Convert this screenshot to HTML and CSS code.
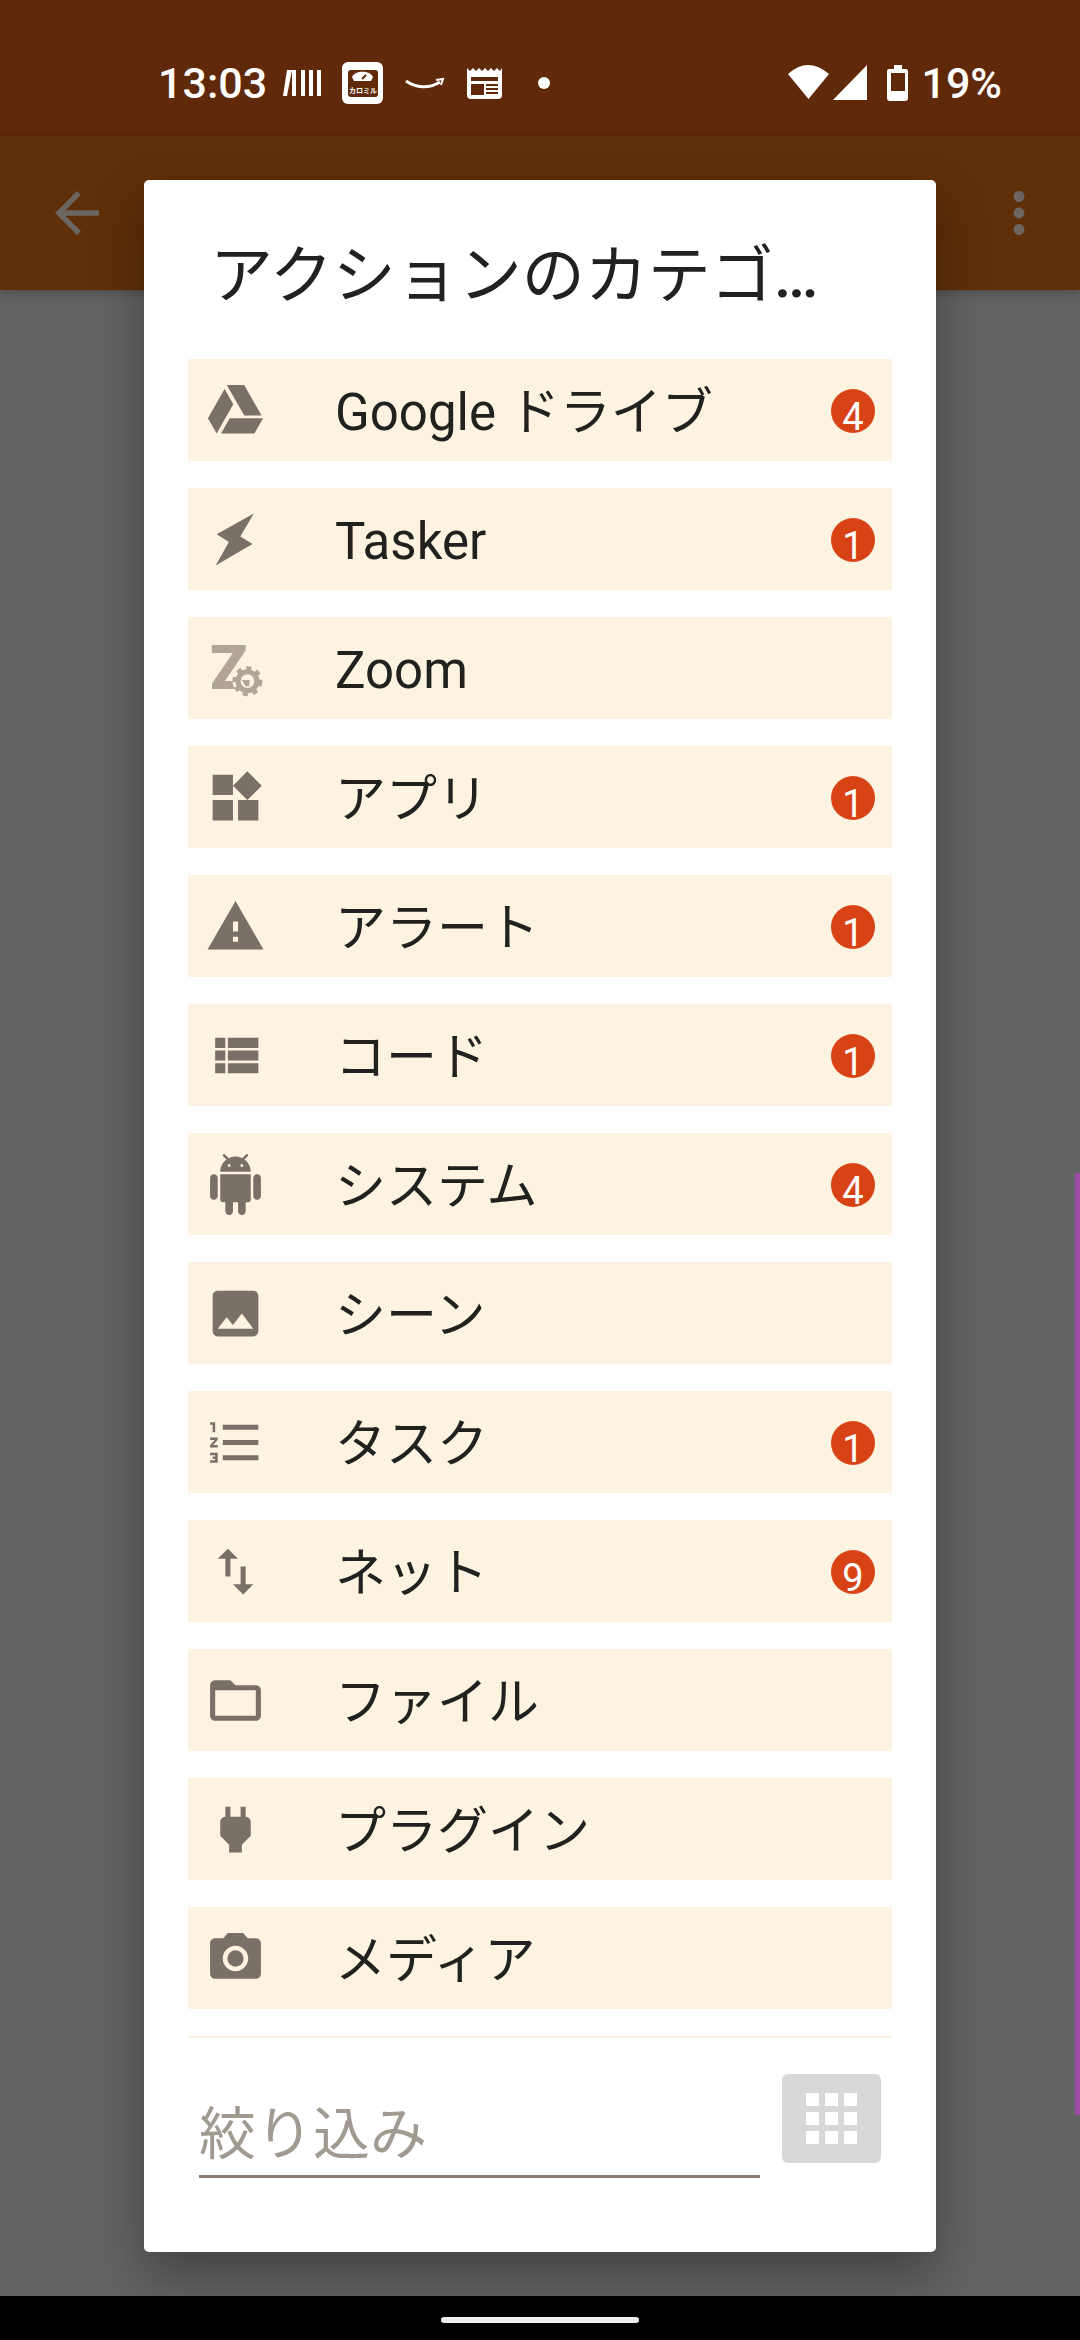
FILE: index.html
```html
<!DOCTYPE html>
<html lang="ja">
<head>
<meta charset="utf-8">
<meta name="viewport" content="width=device-width, initial-scale=1">
<title>アクションのカテゴリ</title>
<link rel="stylesheet" href="styles.css">
</head>
<body>
<div class="screen">
  <div class="status">
    <div class="status-left">
      <span class="clock">13:03</span>
      <div class="notices">
        <svg width="40" height="42" viewBox="0 0 40 42" fill="#fff"><path d="M5 8h5L5 34H1zM10 8h4v26h-4zM19 8h4v26h-4zM27 8h4v26h-4zM35 8h4v26h-4z"/></svg>
        <svg width="42" height="42" viewBox="0 0 42 42"><rect width="41" height="42" rx="6" fill="#fff"/><rect x="6" y="8" width="30" height="27" rx="3" fill="#5f290a"/><path d="M10 15c3-7 18-7 21 0l-2 4H12z" fill="#fff"/><path d="M20 17l4-4" stroke="#5f290a" stroke-width="2"/><text x="7" y="31" class="mini">カロミル</text></svg>
        <svg width="42" height="42" viewBox="0 0 42 42" fill="none" stroke="#fff"><path d="M2 19c10 7 23 8 34 1" stroke-width="3"/><path d="M32 18l7-1-2 6" stroke-width="2"/></svg>
        <svg width="36" height="42" viewBox="0 0 36 42"><path d="M1 6l3 3 3-3 3 3 3-3 3 3 3-3 3 3 3-3 3 3 3-3 3 3 2-3v27q0 4-4 4H5q-4 0-4-4z" fill="#fff"/><path d="M5 15h27v4H5zM5 22h13v11H5zM20 22h12v2H20zM20 26h12v2H20zM20 30h12v2H20z" fill="#5f290a"/></svg>
        <span class="more-dot"></span>
      </div>
    </div>
    <div class="status-right">
      <svg width="79" height="36" viewBox="0 0 79 36" fill="#fff"><path d="M0 9Q20-9 41 9L20.500 34zM79 0v35H45z"/></svg>
      <svg class="battery" width="22" height="36" viewBox="0 0 22 36"><path d="M7 0h8v4h4q2 0 2 2v27q0 3-3 3H3q-3 0-3-3V6q0-2 2-2h5zM4 8v18h14V8z" fill="#fff" fill-rule="evenodd"/></svg>
      <span class="percent">19%</span>
    </div>
  </div>
  <header class="appbar">
    <button class="bar-button" aria-label="戻る"><svg viewBox="0 0 24 24"><path d="M20 11H7.830l5.590-5.590L12 4l-8 8 8 8 1.410-1.410L7.830 13H20v-2z"/></svg></button>
    <button class="bar-button" aria-label="メニュー"><svg viewBox="0 0 24 24"><path d="M12 8c1.100 0 2-.9 2-2s-.9-2-2-2-2 .9-2 2 .9 2 2 2zm0 2c-1.100 0-2 .9-2 2s.9 2 2 2 2-.9 2-2-.9-2-2-2zm0 6c-1.100 0-2 .9-2 2s.9 2 2 2 2-.9 2-2-.9-2-2-2z"/></svg></button>
  </header>
  <main class="content">
    <section class="dialog" role="dialog" aria-labelledby="dialog-title">
      <h1 class="title" id="dialog-title">アクションのカテゴ<span class="ellipsis">…</span></h1>
      <ul class="list">
        <li><button class="row"><svg class="icon" viewBox="0 0 24 24"><path d="M7.710 3.500L1.150 15l3.430 6L11.130 9.500zM9.730 15L6.300 21h13.120l3.430-6zM22.280 14L15.420 2H8.580l6.860 12z"/></svg><span class="label">Google ドライブ</span><span class="badge">4</span></button></li>
        <li><button class="row"><svg class="icon" viewBox="0 0 24 24"><path d="M19.200 1.800L13.900 10.800l4.800 3L4.200 22.200 9.400 13 4.600 9.900z"/></svg><span class="label">Tasker</span><span class="badge">1</span></button></li>
        <li><button class="row"><svg class="icon icon-zoom" viewBox="0 0 24 24"><text x="2" y="20" class="zoom-letter">Z</text><circle cx="16.700" cy="17" r="5.800" class="gear-gap"/><circle cx="16.700" cy="17" r="3.700" class="gear-ring"/><circle cx="16.700" cy="17" r="4.900" class="gear-teeth" pathLength="16"/><path d="M14.500 16.500h3v2.500h-1.500z"/></svg><span class="label">Zoom</span></button></li>
        <li><button class="row"><svg class="icon" viewBox="0 0 24 24"><path d="M13 13v8h8v-8h-8zM3 21h8v-8H3v8zM3 3v8h8V3H3zm13.660-1.310L11 7.340 16.660 13l5.660-5.660-5.660-5.650z"/></svg><span class="label">アプリ</span><span class="badge">1</span></button></li>
        <li><button class="row"><svg class="icon" viewBox="0 0 24 24"><path d="M1 21h22L12 2 1 21zm12-3h-2v-2h2v2zm0-4h-2v-4h2v4z"/></svg><span class="label">アラート</span><span class="badge">1</span></button></li>
        <li><button class="row"><svg class="icon" viewBox="0 0 24 24"><path d="M4 14h4v-4H4v4zm0 5h4v-4H4v4zM4 9h4V5H4v4zm5 5h12v-4H9v4zm0 5h12v-4H9v4zM9 5v4h12V5H9z"/></svg><span class="label">コード</span><span class="badge">1</span></button></li>
        <li><button class="row"><svg class="icon" viewBox="0 0 24 24"><path d="M6 18c0 .55.45 1 1 1h1v3.500c0 .83.67 1.500 1.500 1.500s1.500-.67 1.500-1.500V19h2v3.500c0 .83.67 1.500 1.500 1.500s1.500-.67 1.500-1.500V19h1c.55 0 1-.45 1-1V8H6v10zM3.500 8C2.670 8 2 8.670 2 9.500v7c0 .83.67 1.500 1.500 1.500S5 17.330 5 16.500v-7C5 8.670 4.330 8 3.500 8zm17 0c-.83 0-1.500.67-1.500 1.500v7c0 .83.67 1.500 1.500 1.500s1.500-.67 1.500-1.500v-7c0-.83-.67-1.500-1.500-1.500zm-4.970-5.840l1.300-1.300c.2-.2.2-.51 0-.71-.2-.2-.51-.2-.71 0l-1.480 1.480C13.850 1.230 12.950 1 12 1c-.96 0-1.860.23-2.660.63L7.850.15c-.2-.2-.51-.2-.71 0-.2.2-.2.51 0 .71l1.310 1.310C6.970 3.260 6 5.010 6 7h12c0-1.990-.97-3.750-2.470-4.840zM10 5H9V4h1v1zm5 0h-1V4h1v1z"/></svg><span class="label">システム</span><span class="badge">4</span></button></li>
        <li><button class="row"><svg class="icon" viewBox="0 0 24 24"><path d="M21 19V5c0-1.100-.9-2-2-2H5c-1.100 0-2 .9-2 2v14c0 1.100.9 2 2 2h14c1.100 0 2-.9 2-2zM8.500 13.500l2.500 3.010L14.500 12l4.500 6H5l3.500-4.500z"/></svg><span class="label">シーン</span></button></li>
        <li><button class="row"><svg class="icon" viewBox="0 0 24 24"><path d="M2 17h2v.5H3v1h1v.5H2v1h3v-4H2v1zm1-9h1V4H2v1h1v3zm-1 3h1.800L2 13.100v.9h3v-1H3.200L5 10.900V10H2v1zm5-6v2h14V5H7zm0 14h14v-2H7v2zm0-6h14v-2H7v2z"/></svg><span class="label">タスク</span><span class="badge">1</span></button></li>
        <li><button class="row"><svg class="icon" viewBox="0 0 24 24"><path d="M9 3L5 6.990h3V14h2V6.990h3L9 3zm7 14.010V10h-2v7.010h-3L15 21l4-3.990h-3z"/></svg><span class="label">ネット</span><span class="badge">9</span></button></li>
        <li><button class="row"><svg class="icon" viewBox="0 0 24 24"><path d="M20 6h-8l-2-2H4c-1.100 0-1.990.9-1.990 2L2 18c0 1.100.9 2 2 2h16c1.100 0 2-.9 2-2V8c0-1.100-.9-2-2-2zm0 12H4V8h16v10z"/></svg><span class="label">ファイル</span></button></li>
        <li><button class="row"><svg class="icon" viewBox="0 0 24 24"><path d="M16.010 7L16 3h-2v4h-4V3H8v4h-.01C7 6.990 6 7.990 6 8.990v5.490L9.500 18v3h5v-3l3.500-3.510v-5.500c0-1-1-2-1.990-1.990z"/></svg><span class="label">プラグイン</span></button></li>
        <li><button class="row"><svg class="icon" viewBox="0 0 24 24"><circle cx="12" cy="12" r="3.200"/><path d="M9 2L7.170 4H4c-1.100 0-2 .9-2 2v12c0 1.100.9 2 2 2h16c1.100 0 2-.9 2-2V6c0-1.100-.9-2-2-2h-3.170L15 2H9zm3 15c-2.760 0-5-2.240-5-5s2.240-5 5-5 5 2.240 5 5-2.240 5-5 5z"/></svg><span class="label">メディア</span></button></li>
        <li class="peek" aria-hidden="true"></li>
      </ul>
      <div class="footer">
        <input class="filter" type="text" placeholder="絞り込み" aria-label="絞り込み">
        <button class="grid-button" aria-label="グリッド表示"><svg width="52" height="52" viewBox="0 0 52 52" fill="#fff"><path d="M0 0h13v13H0zM19 0h13v13H19zM38 0h13v13H38zM0 19h13v13H0zM19 19h13v13H19zM38 19h13v13H38zM0 38h13v13H0zM19 38h13v13H19zM38 38h13v13H38z"/></svg></button>
      </div>
    </section>
    <span class="edge-handle"></span>
  </main>
  <div class="navbar"><span class="pill"></span></div>
</div>
</body>
</html>
```
FILE: styles.css
```css
* {
  box-sizing: border-box;
}

body {
  margin: 0;
  font-family: Roboto, "Noto Sans CJK JP", sans-serif;
  color: #212120;
}

button {
  border: 0;
  padding: 0;
  font: inherit;
  color: inherit;
  background: none;
}

svg {
  display: block;
  flex: none;
}

.screen {
  display: flex;
  flex-direction: column;
  min-height: 100vh;
  background: #636363;
}

/* System status bar */
.status {
  display: flex;
  justify-content: space-between;
  align-items: center;
  height: 136px;
  padding: 30px 78px 0 158px;
  background: #5f290a;
  color: #fff;
  font-weight: 500;
}

.status-left,
.status-right,
.notices {
  display: flex;
  align-items: center;
}

.status-left {
  gap: 15px;
}

.notices {
  gap: 20px;
}

.status-right {
  gap: 12px;
}

.battery {
  margin-left: 8px;
}

.clock,
.percent {
  font-size: 43px;
  line-height: 48px;
}

.mini {
  font-size: 7px;
  font-weight: 700;
  fill: #fff;
}

.more-dot {
  width: 12px;
  height: 12px;
  margin-left: 16px;
  border-radius: 50%;
  background: #fff;
}

/* App bar behind the dialog */
.appbar {
  display: flex;
  justify-content: space-between;
  align-items: center;
  height: 154px;
  padding: 0 28px 0 44px;
  background: #5f2f08;
  box-shadow: 0 2px 10px rgba(0, 0, 0, 0.25);
}

.bar-button svg {
  width: 66px;
  height: 66px;
  fill: #6c6560;
}

.content {
  position: relative;
  flex: 1;
  padding: 0 144px 44px;
}

/* Category dialog */
.dialog {
  margin-top: -110px;
  padding: 0 44px;
  border-radius: 5px;
  background: #fff;
  box-shadow: 0 24px 50px rgba(0, 0, 0, 0.32);
}

.title {
  height: 179px;
  margin: 0;
  padding: 50px 22px 0;
  overflow: hidden;
  font-size: 63px;
  font-weight: 400;
  line-height: 92px;
  white-space: nowrap;
}

.ellipsis {
  font-weight: 500;
}

.list {
  display: flex;
  flex-direction: column;
  gap: 27px;
  margin: 0;
  padding: 0;
  list-style: none;
}

.row {
  display: flex;
  align-items: center;
  width: 100%;
  height: 102px;
  padding: 0 17px;
  background: #fef2e0;
  text-align: left;
}

.icon {
  width: 61px;
  height: 61px;
  fill: #797067;
}

.icon-zoom {
  overflow: visible;
  fill: #b2a598;
}

.zoom-letter {
  font-size: 24px;
  font-weight: 900;
}

.gear-gap {
  fill: #fef2e0;
}

.gear-ring {
  fill: none;
  stroke: #b2a598;
  stroke-width: 2;
}

.gear-teeth {
  fill: none;
  stroke: #b2a598;
  stroke-width: 2;
  stroke-dasharray: 1 1;
}

.label {
  flex: 1;
  padding: 6px 0 0 69px;
  font-size: 51px;
  line-height: 76px;
}

.badge {
  width: 44px;
  height: 44px;
  margin-top: 2px;
  border-radius: 50%;
  background: #d84315;
  color: #fff;
  font-size: 38px;
  line-height: 56px;
  text-align: center;
}

.peek {
  height: 2px;
  background: #fef2e0;
}

/* Filter field and view switch */
.footer {
  display: flex;
  align-items: flex-start;
  gap: 22px;
  height: 214px;
  padding: 36px 11px 0;
}

.filter {
  flex: 1;
  min-width: 0;
  height: 104px;
  padding: 20px 0 0;
  border: 0;
  border-bottom: 3px solid #8c7d74;
  border-radius: 0;
  background: none;
  color: #212120;
  font: 400 57px Roboto, "Noto Sans CJK JP", sans-serif;
  outline: 0;
}

.filter::placeholder {
  color: #a09a90;
  opacity: 1;
}

.grid-button {
  display: flex;
  justify-content: center;
  align-items: center;
  width: 99px;
  height: 89px;
  border-radius: 6px;
  background: #d8d8d7;
}

.edge-handle {
  position: absolute;
  right: 0;
  top: 44%;
  bottom: 9%;
  width: 5px;
  background: #9b4da5;
}

/* System navigation bar */
.navbar {
  position: relative;
  display: flex;
  justify-content: center;
  align-items: center;
  height: 44px;
  padding-top: 4px;
  background: #000;
}

.pill {
  width: 198px;
  height: 6px;
  border-radius: 3px;
  background: #eee;
}
```
